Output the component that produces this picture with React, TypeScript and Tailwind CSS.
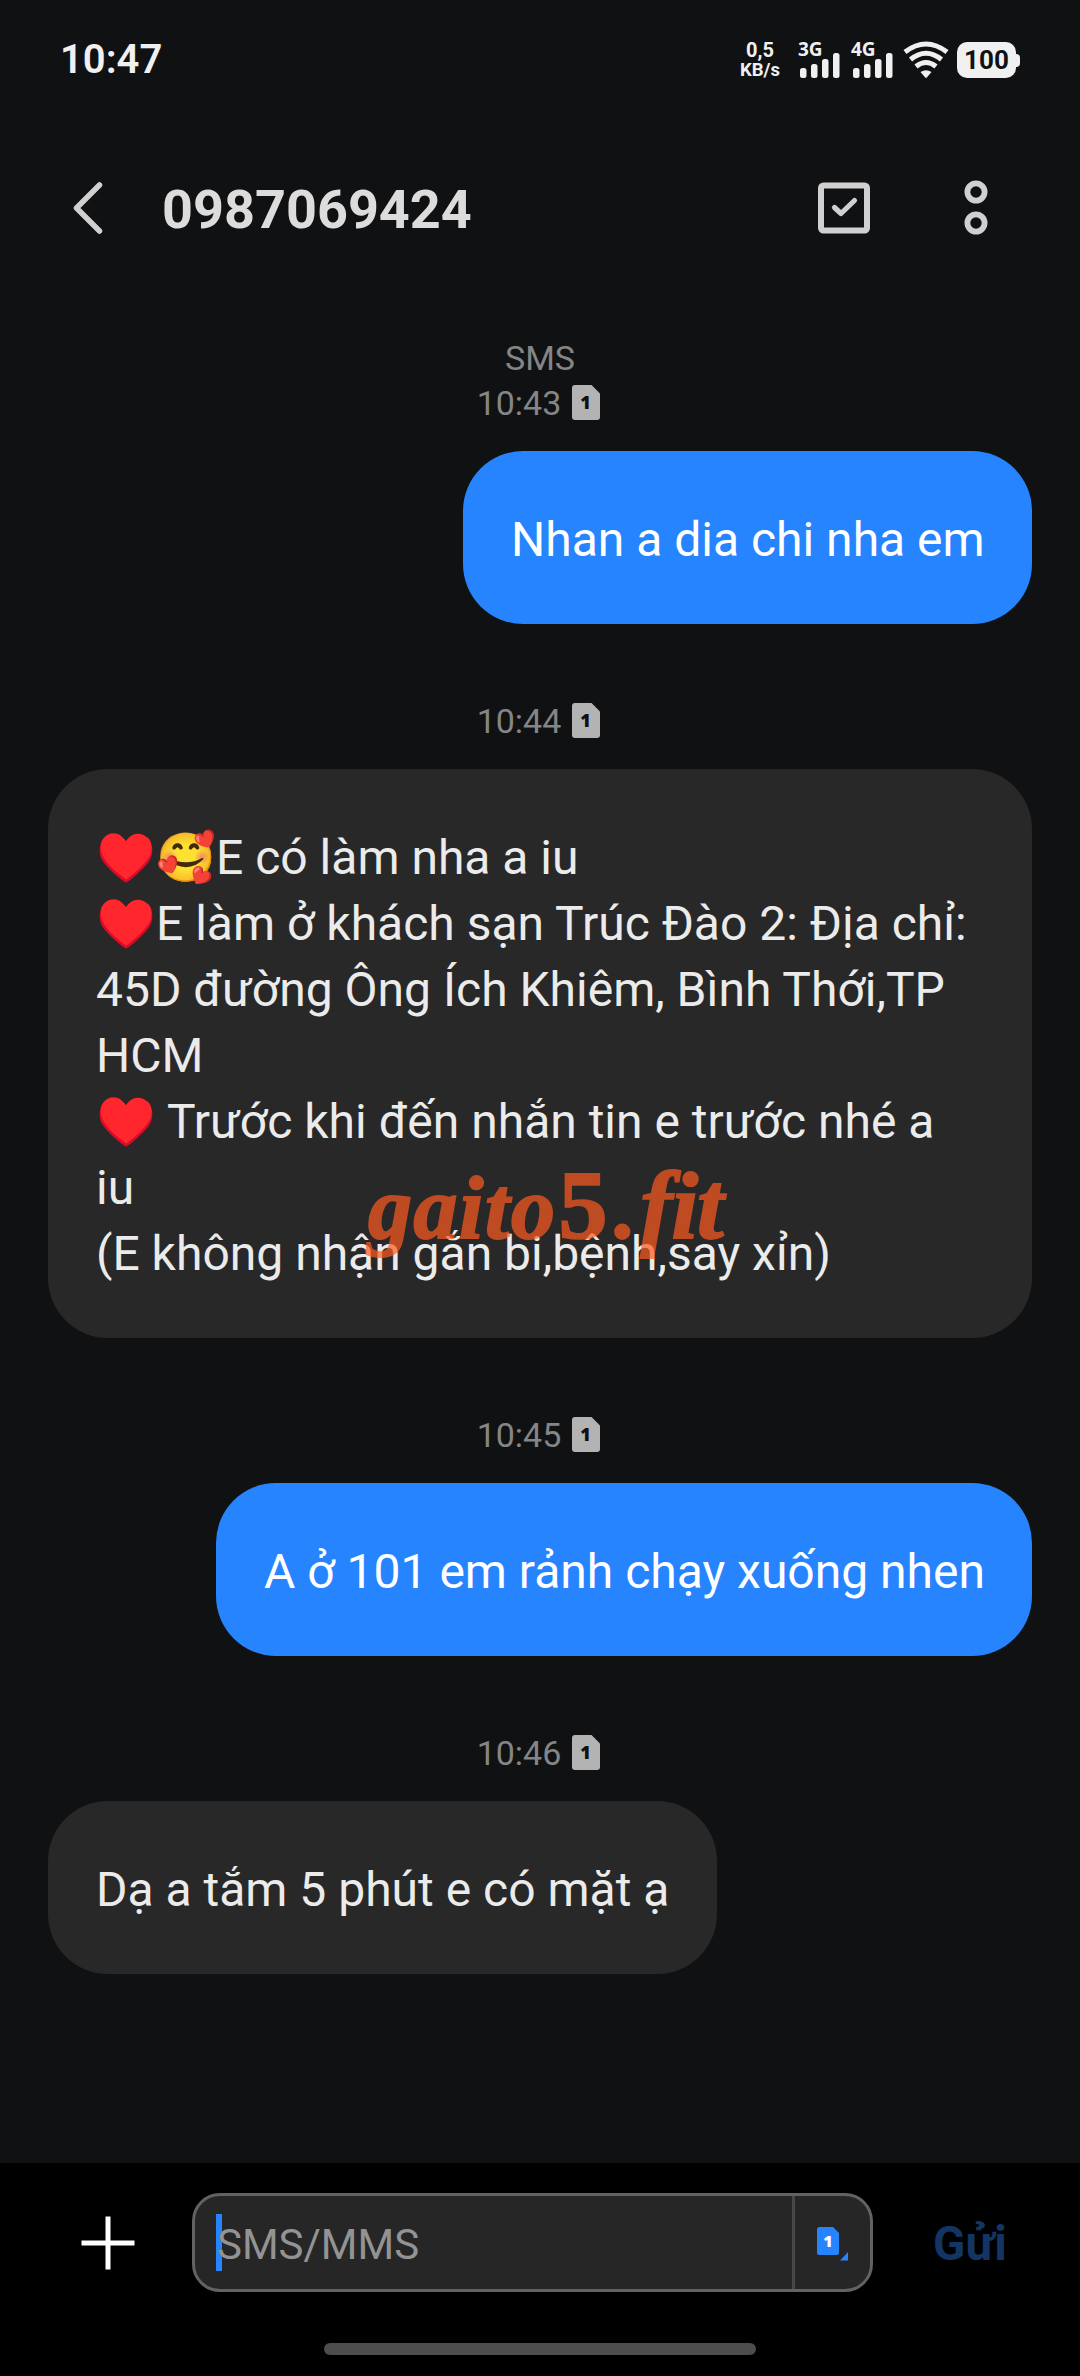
import type { ReactNode } from "react";

type Message = {
  id: number;
  time: string;
  mine: boolean;
  text: string;
  width: string;
};

const messages: Message[] = [
  {
    id: 1,
    time: "10:43",
    mine: true,
    text: "Nhan a dia chi nha em",
    width: "w-[569px]",
  },
  {
    id: 2,
    time: "10:44",
    mine: false,
    text: "♥️🥰E có làm nha a iu\n♥️E làm ở khách sạn Trúc Đào 2: Địa chỉ:\n45D đường Ông Ích Khiêm, Bình Thới,TP\nHCM\n♥️ Trước khi đến nhắn tin e trước nhé a\niu\n(E không nhận gắn bi,bệnh,say xỉn)",
    width: "w-[984px]",
  },
  {
    id: 3,
    time: "10:45",
    mine: true,
    text: "A ở 101 em rảnh chạy xuống nhen",
    width: "w-[816px]",
  },
  {
    id: 4,
    time: "10:46",
    mine: false,
    text: "Dạ a tắm 5 phút e có mặt ạ",
    width: "w-[669px]",
  },
];

export default function App() {
  return (
    <div className="flex h-[2376px] w-[1080px] flex-col overflow-hidden bg-[#101113] font-[Roboto,sans-serif] text-[#ebebeb]">
      <StatusBar />
      <ChatHeader />

      <main className="flex flex-1 flex-col px-12 pt-10">
        <p className="text-center text-[34px] leading-[44px] text-[#858585]">
          SMS
        </p>
        {messages.map((message) => (
          <MessageItem key={message.id} message={message}>
            {message.id === 2 && <Watermark />}
          </MessageItem>
        ))}
      </main>

      <Composer />
    </div>
  );
}

function StatusBar() {
  return (
    <div className="flex h-[120px] items-center justify-between pr-[60px] pl-[60px] text-[#f0f0f0]">
      <span className="text-[40px] font-semibold">10:47</span>
      <div className="flex items-center">
        <div className="mr-[17px] flex w-[40px] flex-col items-center text-[20px] leading-[20px] font-bold">
          <span>0,5</span>
          <span className="text-[18.500px]">KB/s</span>
        </div>
        <Signal label="3G" />
        <Signal label="4G" />
        <svg width="46" height="38" viewBox="0 0 46 38" className="mr-2">
          <g fill="none" stroke="#f0f0f0" strokeWidth="5">
            <path d="M2 11Q23 -5 44 11" />
            <path d="M7.500 18.500Q23 6 38.500 18.500" />
            <path d="M13 25.500Q23 17.500 33 25.500" />
          </g>
          <path d="M17.500 31Q23 27.500 28.500 31L23.800 36.500Q23 37.300 22.200 36.500Z" fill="#f0f0f0" />
        </svg>
        <div className="flex h-9 w-[59px] items-center justify-center rounded-[10px] bg-[#f0f0f0] text-[26px] font-bold text-[#101113]">
          100
        </div>
        <div className="h-[13px] w-1 rounded-r-sm bg-[#f0f0f0]" />
      </div>
    </div>
  );
}

function Signal({ label }: { label: string }) {
  return (
    <svg width="52" height="36" viewBox="0 0 52 36" fill="#f0f0f0" className="mr-px overflow-visible">
      <text x="1" y="14" fontSize="19" fontWeight="700" fontFamily="Open Sans, sans-serif">
        {label}
      </text>
      <rect x="3" y="26" width="6.500" height="10" rx="2.500" />
      <rect x="14" y="22" width="6.500" height="14" rx="2.500" />
      <rect x="25" y="17" width="6.500" height="19" rx="2.500" />
      <rect x="36" y="11" width="6.500" height="25" rx="2.500" />
    </svg>
  );
}

function ChatHeader() {
  return (
    <header className="flex h-[176px] items-center pr-[92px] pl-[72px]">
      <svg width="32" height="54" viewBox="0 0 32 54" fill="none" stroke="#d0d0d0" strokeWidth="5.500" strokeLinecap="round" strokeLinejoin="round">
        <path d="M27.500 4L4.500 27L27.500 50" />
      </svg>
      <h1 className="ml-[58px] flex-1 pt-[3px] text-[54px] font-bold text-[#dcdcdc]">
        0987069424
      </h1>
      <svg width="52" height="52" viewBox="0 0 52 52" fill="none" stroke="#d0d0d0" strokeLinecap="round" strokeLinejoin="round">
        <rect x="3" y="3.500" width="46" height="45" rx="2.500" strokeWidth="6" />
        <path d="M16.500 25.500L23 31.500L36.500 18.500" strokeWidth="5.200" />
      </svg>
      <svg width="24" height="56" viewBox="0 0 24 56" className="ml-[94px]" fill="none" stroke="#d0d0d0" strokeWidth="5.800">
        <circle cx="12" cy="12" r="8.600" />
        <circle cx="12" cy="43" r="8.600" />
      </svg>
    </header>
  );
}

function MessageItem({
  message,
  children,
}: {
  message: Message;
  children?: ReactNode;
}) {
  return (
    <div className="mb-[74px] flex flex-col">
      <div className="flex h-[45px] items-center justify-center gap-[11px] pr-[3px] text-[34px] text-[#858585]">
        <span className="pt-0.5">{message.time}</span>
        <SimIcon />
      </div>
      <div
        className={`relative mt-[26px] rounded-[60px] px-12 pt-14 pb-[51px] text-[48px] leading-[66px] whitespace-pre ${message.width} ${
          message.mine
            ? "self-end bg-[#2684ff] text-white"
            : "self-start bg-[#282828]"
        }`}
      >
        {message.text}
        {children}
      </div>
    </div>
  );
}

function SimIcon() {
  return (
    <svg width="28" height="35" viewBox="0 0 28 35">
      <path d="M3 0H19.500L28 8.500V32Q28 35 25 35H3Q0 35 0 32V3Q0 0 3 0Z" fill="#b3b3b3" />
      <text x="13.500" y="24" textAnchor="middle" fontSize="18" fontWeight="800" fontFamily="Open Sans, sans-serif" fill="#101113">
        1
      </text>
    </svg>
  );
}

function Watermark() {
  return (
    <div className="absolute top-[386px] left-[320px] flex items-baseline font-['Liberation_Serif',serif] text-[88px] leading-[100px] font-bold text-[#ff5a20] italic opacity-70 [-webkit-text-stroke:2px_#ff5a20]">
      <span className="tracking-[1.500px]">gaito</span>
      <span className="ml-0.5 text-[98px] not-italic">5</span>
      <span className="ml-[7px]">.</span>
      <span className="ml-[4px] text-[96px] tracking-[-1px]">fit</span>
    </div>
  );
}

function Composer() {
  return (
    <footer className="flex h-[213px] flex-col bg-black">
      <div className="mt-[30px] flex h-[99px] items-center">
        <svg width="54" height="54" viewBox="0 0 54 54" className="ml-[81px]" stroke="white" strokeWidth="5">
          <path d="M27 0.500V53.500M0.500 27H53.500" />
        </svg>
        <div className="ml-[57px] flex h-[99px] w-[681px] rounded-[28px] border-[3px] border-[#626262] bg-[#262626]">
          <div className="relative flex flex-1 items-center pt-1 pl-[22px] text-[42px] text-[#939393]">
            <span className="absolute top-[18px] left-[21px] h-[57px] w-1.5 bg-[#2684ff]" />
            <span className="relative">SMS/MMS</span>
          </div>
          <div className="flex w-[78px] items-center border-l-[3px] border-[#484848] pt-0.5 pl-[22px]">
            <svg width="31" height="34" viewBox="0 0 31 34" fill="#2684ff">
              <path d="M2.500 0H16L22 6V25.500Q22 28 19.500 28H2.500Q0 28 0 25.500V2.500Q0 0 2.500 0Z" />
              <path d="M31 25V33.500H23Z" />
              <text x="11" y="20" textAnchor="middle" fontSize="16" fontWeight="800" fontFamily="Open Sans, sans-serif" fill="white">
                1
              </text>
            </svg>
          </div>
        </div>
        <button className="ml-[60px] pt-[5px] text-[47.500px] font-bold text-[#133564]">
          Gửi
        </button>
      </div>
      <div className="mt-[51px] h-3 w-[432px] self-center rounded-full bg-[#4d4d4d]" />
    </footer>
  );
}
